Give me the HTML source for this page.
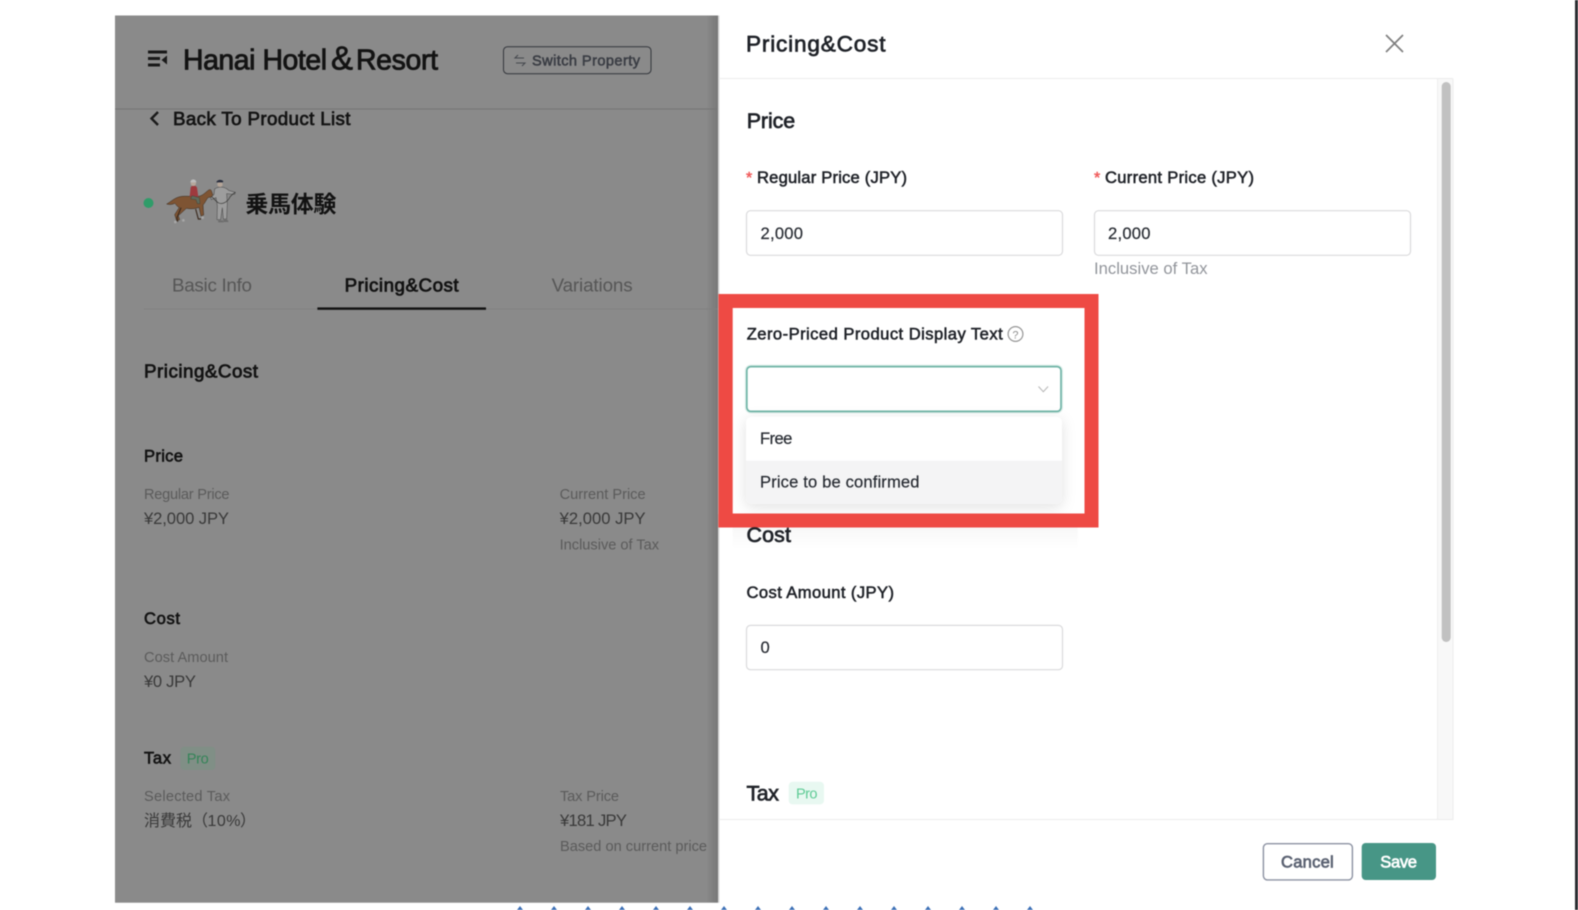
<!DOCTYPE html>
<html lang="en"><head><meta charset="utf-8"><title>Pricing&amp;Cost</title>
<style>
html,body{margin:0;padding:0;width:1578px;height:910px;overflow:hidden;background:#fff}
svg{display:block;filter:blur(.42px)}
svg svg{filter:none}
text{font-family:"Liberation Sans","Noto Sans CJK JP",sans-serif;fill:currentColor}
.m{stroke:currentColor;stroke-width:.55px}
.b{stroke:currentColor;stroke-width:.7px}
.h{color:#131313}.tab{color:#565656;font-size:18.8px}.l{color:#5b5b5b;font-size:14.6px}.v{color:#393939;font-size:16.6px}
.r{color:#1f2228}.f{color:#272b32;font-size:16.6px}
</style></head><body>
<svg width="1578" height="910" viewBox="0 0 1578 910" xmlns="http://www.w3.org/2000/svg">
<defs>
<linearGradient id="edge" x1="0" x2="1"><stop offset="0" stop-color="#000" stop-opacity="0"/><stop offset="1" stop-color="#000" stop-opacity=".13"/></linearGradient>
<linearGradient id="fade" x1="0" x2="0" y1="0" y2="1"><stop offset="0" stop-color="#000" stop-opacity=".03"/><stop offset="1" stop-color="#000" stop-opacity="0"/></linearGradient>
<filter id="sh" x="-10%" y="-30%" width="120%" height="160%"><feDropShadow dx="0" dy="3" stdDeviation="7" flood-color="#000" flood-opacity=".12"/></filter>
</defs>
<rect width="1578" height="910" fill="#fff"/>
<rect x="1575" width="3" height="910" fill="#2a2c30"/>

<!-- left dimmed page -->
<rect x="115" y="15.5" width="603" height="887.2" fill="#8a8a8a"/>
<rect x="706" y="15.5" width="12" height="887.2" fill="url(#edge)"/>
<rect x="718" y="15.5" width="1.5" height="887.2" fill="#d8d8d8"/>
<rect x="115" y="108.5" width="603" height="1" fill="#757575"/>

<g fill="#1a1a1a">
<rect x="148" y="50.5" width="19" height="3"/><rect x="148" y="57" width="12" height="3"/><rect x="148" y="63.5" width="12" height="3"/>
<path d="M167 55.5v9l-5.5-4.5z"/>
</g>
<text class="h b" x="183" y="69.3" font-size="28.4" textLength="144" style="stroke-width:.85px">Hanai Hotel</text>
<text class="h b" x="331" y="69.3" font-size="33" textLength="23.5">&amp;</text>
<text class="h b" x="356" y="69.3" font-size="28.4" textLength="82" style="stroke-width:.85px">Resort</text>

<rect x="503.5" y="46.7" width="147.5" height="27" rx="4" fill="none" stroke="#33363c" stroke-width="1"/>
<path d="M524 58h-9l3-3M516 63h9l-3 3" fill="none" stroke="#44474d" stroke-width="1"/>
<text class="m" x="532" y="65.5" font-size="14.6" textLength="108" style="color:#3a3d44">Switch Property</text>

<path d="M158 112l-6.5 6.5 6.5 6.5" fill="none" stroke="#1a1a1a" stroke-width="2.4"/>
<text class="h m" x="173" y="125" font-size="18.8" textLength="177.5" style="stroke-width:.7px">Back To Product List</text>

<circle cx="148.5" cy="203" r="5" fill="#2f9c69"/>
<!-- horse illustration -->
<svg x="150" y="165" width="200" height="70" viewBox="0 0 600 210">
<path d="M50 117c12-6 22-18 40-22 20-4 40 2 60-2 8-2 18-12 26-18 5-3 8 0 9 5 2 6 5 12 2 15-3 3-10 0-14 4-4 5-8 15-14 21l2 30-8 3-6-26c-12 5-26 5-38 3l-24 22 4 12-9 3-6-18 14-22c-8-2-8-8-14-12-6 3-14 5-24 2z" fill="#7e5433" stroke="#3a2c20" stroke-width="1.5"/>
<path d="M137 132l8 30 8 0M93 128l-12 30 2 12" fill="none" stroke="#3a2a1e" stroke-width="3.5"/>
<circle cx="76" cy="171" r="4" fill="#a8a8a8"/><circle cx="100" cy="166" r="4" fill="#a8a8a8"/><circle cx="158" cy="158" r="4" fill="#a8a8a8"/>
<path d="M119 94l3-26c2-8 16-8 19 0l4 28z" fill="#9e3a3e"/>
<path d="M126 92l22 6 2 18-8 0-4-12-16-2z" fill="#5f6a5a" stroke="#33332e" stroke-width="1"/>
<circle cx="130" cy="55" r="8" fill="#b6a89c"/><path d="M121 52a9 9 0 0 1 18 0z" fill="#bdbdbd"/>
<path d="M194 72c10-8 30-8 42 4l20 6-2 6-24-2 2 30-2 46h-10l-3-34-5 36h-11l1-42-4-24-14 6-2-6 10-10z" fill="#9d9d9d" stroke="#4a4a4a" stroke-width="1.6"/>
<path d="M184 94c8 6 14 16 22 20 14 6 28-6 34-18 4-6 10-10 16-14" fill="none" stroke="#30302e" stroke-width="2"/>
<circle cx="210" cy="58" r="8" fill="#b5a598"/><path d="M199 52c2-8 16-10 21-3l-2 3z" fill="#272c3c"/>
<path d="M204 166h14l3 6h-16zM220 164h12l4 7h-16z" fill="#6d6d6d"/>
</svg>
<text x="245.4" y="212" font-size="23" font-weight="700" textLength="91" style="color:#121212">乗馬体験</text>

<rect x="144" y="308.5" width="574" height="1" fill="#808080"/>
<text class="tab" x="172" y="291.5" textLength="80">Basic Info</text>
<text class="tab h m" x="344.6" y="291.5" style="font-size:18.8px;color:#121212;stroke-width:.75px" textLength="114">Pricing&amp;Cost</text>
<text class="tab" x="551.6" y="291.5" textLength="81">Variations</text>
<rect x="317.4" y="307.4" width="168.6" height="2.4" fill="#111"/>

<text class="h m" x="144" y="377.3" font-size="18.8" textLength="114" style="stroke-width:.75px">Pricing&amp;Cost</text>
<text class="h m" x="144" y="461.3" font-size="16.6" textLength="39" style="stroke-width:.65px">Price</text>
<text class="l" x="144" y="498.9" textLength="85.5">Regular Price</text>
<text class="v" x="144" y="524.2" textLength="85">¥2,000 JPY</text>
<text class="l" x="559.6" y="498.9" textLength="86">Current Price</text>
<text class="v" x="559.6" y="524.2" textLength="86">¥2,000 JPY</text>
<text class="l" x="559.6" y="549.3" textLength="99.5">Inclusive of Tax</text>
<text class="h m" x="144" y="624" font-size="16.6" textLength="36" style="stroke-width:.65px">Cost</text>
<text class="l" x="144" y="661.9" textLength="84">Cost Amount</text>
<text class="v" x="144" y="687" textLength="52">¥0 JPY</text>
<text class="h m" x="144" y="763.3" font-size="16.6" textLength="27" style="stroke-width:.65px">Tax</text>
<rect x="180.4" y="746.7" width="35" height="23.3" rx="4" fill="#808f86"/>
<text x="186.8" y="763.3" font-size="14.6" textLength="22" style="color:#348458">Pro</text>
<text class="l" x="144" y="801" textLength="86">Selected Tax</text>
<text class="v" x="144" y="826" style="font-size:16px">消費税（</text>
<text class="v" x="207.5" y="826" textLength="33" style="font-size:16px">10%</text>
<text class="v" x="240" y="826" style="font-size:16px">）</text>
<text class="l" x="560" y="801" textLength="59">Tax Price</text>
<text class="v" x="560" y="826" textLength="67">¥181 JPY</text>
<text class="l" x="560" y="850.9" textLength="147">Based on current price</text>

<!-- triangles -->
<g fill="#3b6fb6"><path d="M517 910l3-4 3 4zM551 910l3-4 3 4zM585 910l3-4 3 4zM619 910l3-4 3 4zM653 910l3-4 3 4zM687 910l3-4 3 4zM721 910l3-4 3 4zM755 910l3-4 3 4zM789 910l3-4 3 4zM823 910l3-4 3 4zM857 910l3-4 3 4zM891 910l3-4 3 4zM925 910l3-4 3 4zM959 910l3-4 3 4zM993 910l3-4 3 4zM1027 910l3-4 3 4z"/></g>

<!-- drawer -->
<text class="r b" x="746" y="51.3" font-size="22.6" textLength="139.5">Pricing&amp;Cost</text>
<path d="M1386 35l17 17M1403 35l-17 17" stroke="#7f7f7f" stroke-width="1.7" fill="none"/>
<rect x="719" y="78" width="734" height="1" fill="#ececec"/>
<rect x="719" y="819" width="734" height="1" fill="#ececec"/>
<rect x="1437" y="79" width="16" height="740" fill="#f8f8f8"/>
<rect x="1437" y="79" width="1" height="740" fill="#eeeeee"/>
<rect x="1452.5" y="79" width="1" height="741" fill="#ececec"/>
<rect x="1441.7" y="82" width="9" height="560" rx="4.5" fill="#c1c1c1"/>

<text class="r b" x="746.7" y="128.2" font-size="21.4" textLength="48.5">Price</text>

<text x="746" y="183" font-size="16" textLength="6" style="color:#f05b5b;stroke:currentColor;stroke-width:.5px">*</text>
<text class="r m" x="757" y="183.2" font-size="16.6" textLength="150">Regular Price (JPY)</text>
<rect x="746.5" y="210.7" width="316" height="44.6" rx="4" fill="#fff" stroke="#dadadc" stroke-width="1.2"/>
<text class="f" x="760.5" y="239" textLength="42.5" style="stroke:currentColor;stroke-width:.2px">2,000</text>

<text x="1094" y="183" font-size="16" textLength="6" style="color:#f05b5b;stroke:currentColor;stroke-width:.5px">*</text>
<text class="r m" x="1105" y="183.2" font-size="16.6" textLength="149">Current Price (JPY)</text>
<rect x="1094.5" y="210.7" width="316" height="44.6" rx="4" fill="#fff" stroke="#dadadc" stroke-width="1.2"/>
<text class="f" x="1108" y="239" textLength="42.5" style="stroke:currentColor;stroke-width:.2px">2,000</text>
<text x="1094" y="274" font-size="16.6" textLength="113.5" style="color:#92959b">Inclusive of Tax</text>

<!-- highlighted select -->
<rect x="725.5" y="301" width="366" height="219.5" fill="none" stroke="#ee4a44" stroke-width="14"/>
<text class="r m" x="746.7" y="339.7" font-size="16.6" textLength="256">Zero-Priced Product Display Text</text>
<circle cx="1015.5" cy="334" r="7.4" fill="none" stroke="#959595" stroke-width="1.2"/>
<text x="1012.4" y="338.4" font-size="11" style="color:#8f8f8f">?</text>
<rect x="746.8" y="366.6" width="314.2" height="44.8" rx="4" fill="#fff" stroke="#6fb4a6" stroke-opacity=".22" stroke-width="4"/>
<rect x="746.8" y="366.6" width="314.2" height="44.8" rx="4" fill="#fff" stroke="#6fb4a6" stroke-width="1.7"/>
<path d="M1038.5 386.5l4.8 5.2 4.8-5.2" fill="none" stroke="#b9b9b9" stroke-width="1.1"/>
<rect x="746" y="416.7" width="316" height="87" rx="6" fill="#fff" filter="url(#sh)"/>
<path d="M746 460.7h316v37a6 6 0 0 1-6 6H752a6 6 0 0 1-6-6z" fill="#f4f4f5"/>
<text class="f" x="760" y="443.8" textLength="32.3" style="stroke:currentColor;stroke-width:.2px">Free</text>
<text class="f" x="760" y="487.3" textLength="159.5" style="stroke:currentColor;stroke-width:.2px">Price to be confirmed</text>
<rect x="718.4" y="294" width="14.3" height="233.3" fill="#ee4a44"/>
<rect x="1085" y="294" width="13.3" height="233.3" fill="#ee4a44"/>
<rect x="718.4" y="514" width="379.9" height="13.3" fill="#ee4a44"/>
<rect x="732.7" y="527.3" width="345" height="22" fill="url(#fade)"/>

<text class="r b" x="746.5" y="542.2" font-size="21.4" textLength="44.5">Cost</text>
<text class="r m" x="746.5" y="598.2" font-size="16.6" textLength="147.5">Cost Amount (JPY)</text>
<rect x="746.5" y="625.4" width="316" height="44.3" rx="4" fill="#fff" stroke="#dadadc" stroke-width="1.2"/>
<text class="f" x="760.5" y="653.2" textLength="9" style="stroke:currentColor;stroke-width:.2px">0</text>
<text class="r b" x="746.5" y="800.7" font-size="21.4" textLength="32.5">Tax</text>
<rect x="788.7" y="781.7" width="35.3" height="22.7" rx="4" fill="#e8f8f1"/>
<text x="796" y="798.3" font-size="14.6" textLength="21.5" style="color:#5ecb95">Pro</text>

<rect x="1263.4" y="843.7" width="89" height="36.2" rx="4" fill="#fff" stroke="#8c92a2" stroke-width="1.4"/>
<text class="b" x="1281" y="867.5" font-size="16.6" textLength="52.7" style="color:#5b6272">Cancel</text>
<rect x="1361.7" y="843" width="74.3" height="37" rx="4" fill="#479686"/>
<text class="b" x="1380.3" y="867.5" font-size="16.6" textLength="36.7" style="color:#fff">Save</text>
</svg>
</body></html>
